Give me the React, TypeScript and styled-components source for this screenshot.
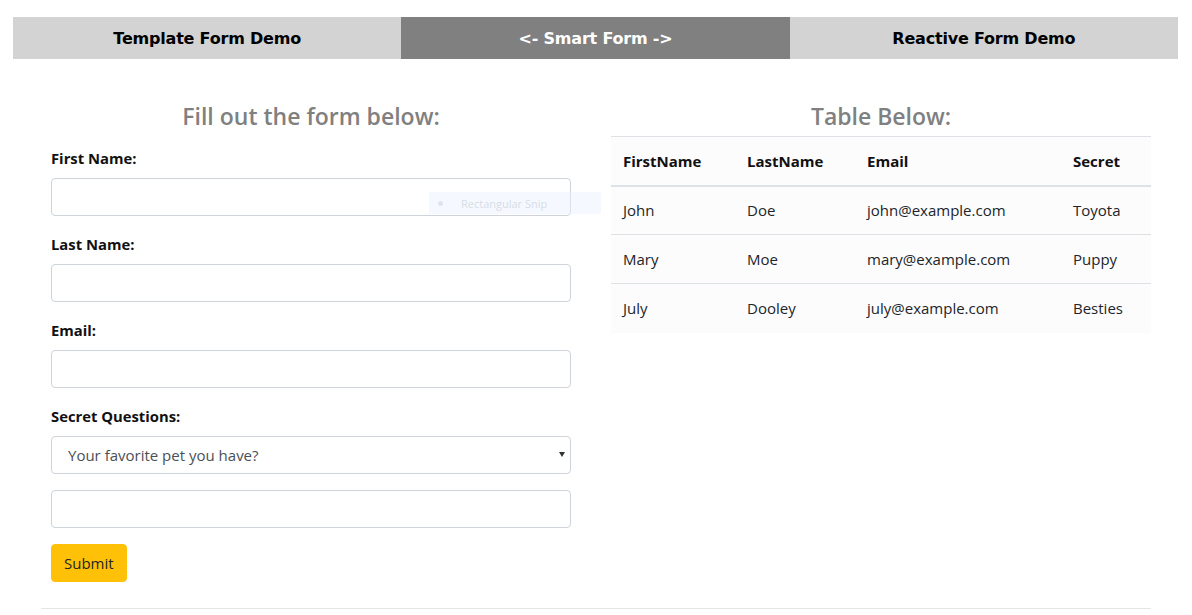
import styled, { createGlobalStyle } from 'styled-components';

const GlobalStyle = createGlobalStyle`
  body {
    margin: 0;
    background: #fff;
    font-family: "Open Sans", "Noto Sans", sans-serif;
    color: #212529;
  }
  * { box-sizing: border-box; }
`;

const Page = styled.div`
  padding: 17px 14px 0 13px;
`;

const TabBar = styled.nav`
  display: flex;
  height: 42px;
`;

const Tab = styled.a<{ $active?: boolean }>`
  flex: 1;
  display: flex;
  align-items: center;
  justify-content: center;
  background: ${(p) => (p.$active ? '#808080' : '#d3d3d3')};
  color: ${(p) => (p.$active ? '#fff' : '#000')};
  font-family: "DejaVu Sans", Verdana, sans-serif;
  font-weight: bold;
  font-size: 16px;
  letter-spacing: -0.2px;
  text-decoration: none;
  cursor: pointer;
`;

const Content = styled.div`
  position: relative;
  display: flex;
  gap: 40px;
  padding: 41px 0 0 38px;
`;

const Column = styled.section<{ $width: number }>`
  width: ${(p) => p.$width}px;
  display: flex;
  flex-direction: column;
`;

const Heading = styled.h3<{ $gap: number }>`
  margin: 0 0 ${(p) => p.$gap}px;
  text-align: center;
  color: #808080;
  font-size: 23px;
  font-weight: 600;
  line-height: 32px;
`;

const Form = styled.form`
  display: flex;
  flex-direction: column;
`;

const Group = styled.div`
  display: flex;
  flex-direction: column;
  margin-bottom: 16px;
`;

const Label = styled.label`
  font-size: 14.8px;
  font-weight: 700;
  line-height: 24px;
  margin-bottom: 8px;
  color: #111;
`;

const Input = styled.input`
  height: 38px;
  width: 100%;
  padding: 6px 12px;
  border: 1px solid #ced4da;
  border-radius: 4px;
  font: inherit;
  font-size: 15px;
  color: #495057;
  background: #fff;
`;

const SelectWrap = styled.div`
  position: relative;
  margin-bottom: 16px;
`;

const Select = styled.select`
  appearance: none;
  height: 38px;
  width: 100%;
  padding: 0 12px 0 16px;
  border: 1px solid #ced4da;
  border-radius: 4px;
  font-family: inherit;
  font-size: 15px;
  color: #495057;
  background: #fff;
`;

const Caret = styled.span`
  position: absolute;
  right: 6px;
  top: 16px;
  width: 0;
  height: 0;
  border-left: 3px solid transparent;
  border-right: 3px solid transparent;
  border-top: 5px solid #333;
  pointer-events: none;
`;

const Submit = styled.button`
  align-self: flex-start;
  height: 38px;
  padding: 0 12px;
  border: 1px solid #ffc107;
  border-radius: 4px;
  background: #ffc107;
  color: #212529;
  font-family: inherit;
  font-size: 15px;
  cursor: pointer;
`;

const Table = styled.table`
  width: 100%;
  border-collapse: collapse;
  background: #fcfcfd;
  font-size: 15px;
`;

const Th = styled.th<{ $width: number }>`
  width: ${(p) => p.$width}px;
  text-align: left;
  font-weight: 700;
  padding: 12px;
  height: 49px;
  border-top: 1px solid #dee2e6;
  border-bottom: 2px solid #dee2e6;
  color: #111;
`;

const Td = styled.td`
  padding: 12px;
  height: 49px;
  border-top: 1px solid #dee2e6;
  color: #212529;
`;

const Rule = styled.hr`
  margin: 26px 0 0 28px;
  width: 1110px;
  border: 0;
  border-top: 1px solid #e5e5e5;
`;

const SnipHint = styled.div`
  position: absolute;
  left: 416px;
  top: 133px;
  width: 172px;
  height: 22px;
  display: flex;
  align-items: center;
  gap: 18px;
  padding-left: 9px;
  background: rgba(232, 242, 255, 0.45);
  color: #d6dde6;
  font-size: 11px;
  pointer-events: none;
`;

const SnipDot = styled.span`
  width: 5px;
  height: 5px;
  border-radius: 50%;
  background: #dde4ee;
`;

const rows = [
  { first: 'John', last: 'Doe', email: 'john@example.com', secret: 'Toyota' },
  { first: 'Mary', last: 'Moe', email: 'mary@example.com', secret: 'Puppy' },
  { first: 'July', last: 'Dooley', email: 'july@example.com', secret: 'Besties' },
];

export default function App() {
  return (
    <>
      <GlobalStyle />
      <Page>
        <TabBar>
          <Tab>Template Form Demo</Tab>
          <Tab $active>{'<- Smart Form ->'}</Tab>
          <Tab>Reactive Form Demo</Tab>
        </TabBar>
        <Content>
          <Column $width={520}>
            <Heading $gap={14}>Fill out the form below:</Heading>
            <Form onSubmit={(e) => e.preventDefault()}>
              <Group>
                <Label>First Name:</Label>
                <Input type="text" />
              </Group>
              <Group>
                <Label>Last Name:</Label>
                <Input type="text" />
              </Group>
              <Group>
                <Label>Email:</Label>
                <Input type="email" />
              </Group>
              <Label>Secret Questions:</Label>
              <SelectWrap>
                <Select defaultValue="pet">
                  <option value="pet">Your favorite pet you have?</option>
                  <option value="car">Your first car?</option>
                  <option value="friend">Your best friend?</option>
                </Select>
                <Caret />
              </SelectWrap>
              <Group>
                <Input type="text" />
              </Group>
              <Submit type="submit">Submit</Submit>
            </Form>
          </Column>
          <Column $width={540}>
            <Heading $gap={4}>Table Below:</Heading>
            <Table>
              <thead>
                <tr>
                  <Th $width={124}>FirstName</Th>
                  <Th $width={120}>LastName</Th>
                  <Th $width={206}>Email</Th>
                  <Th $width={90}>Secret</Th>
                </tr>
              </thead>
              <tbody>
                {rows.map((r) => (
                  <tr key={r.email}>
                    <Td>{r.first}</Td>
                    <Td>{r.last}</Td>
                    <Td>{r.email}</Td>
                    <Td>{r.secret}</Td>
                  </tr>
                ))}
              </tbody>
            </Table>
          </Column>
          <SnipHint>
            <SnipDot />
            Rectangular Snip
          </SnipHint>
        </Content>
        <Rule />
      </Page>
    </>
  );
}
